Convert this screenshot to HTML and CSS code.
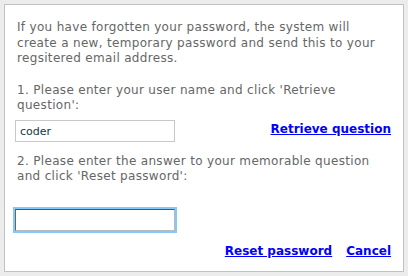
FILE: index.html
```html
<!DOCTYPE html>
<html>
<head>
<meta charset="utf-8">
<link rel="stylesheet" href="styles.css">
</head>
<body>
<div class="panel">
  <p class="text">If you have forgotten your password, the system will create a new, temporary password and send this to your regsitered email address.</p>
  <p class="text step">1. Please enter your user name and click 'Retrieve question':</p>
  <div class="row">
    <input class="field" type="text" value="coder">
    <a class="link" href="#">Retrieve question</a>
  </div>
  <p class="text step2">2. Please enter the answer to your memorable question and click 'Reset password':</p>
  <div class="row row2">
    <input class="field focus" type="text" value="">
  </div>
  <div class="actions">
    <a class="link" href="#">Reset password</a>
    <a class="link" href="#">Cancel</a>
  </div>
</div>
</body>
</html>
```
FILE: styles.css
```css
html, body {
  margin: 0;
  padding: 0;
  background: #ececec;
}
body {
  padding: 4px;
  font-family: "DejaVu Sans", Verdana, sans-serif;
  font-size: 12px;
}
.panel {
  width: 374px;
  height: 240px;
  background: #ffffff;
  border: 1px solid #c2c2c2;
  padding: 15px 12px 11px 12px;
  display: flex;
  flex-direction: column;
}
.text {
  margin: 0;
  max-width: 364px;
  color: #666666;
  line-height: 15.5px;
  letter-spacing: 0.32px;
}
.step {
  margin-top: 16px;
}
.row {
  display: flex;
  align-items: center;
  justify-content: space-between;
  margin-top: 6px;
}
.field {
  box-sizing: border-box;
  width: 160px;
  height: 22px;
  margin: 0 0 0 -2px;
  border: 1px solid #c8c8c8;
  padding: 2px 4px 0;
  font-family: "DejaVu Sans", Verdana, sans-serif;
  font-size: 11px;
  color: #0f3a44;
  background: #fff;
  outline: none;
}
.focus {
  border: 1px solid #b9b9b9;
  border-top-color: #555555;
  border-left-color: #666666;
  box-shadow: 0 0 0 2px #84c9fb;
}
.link {
  color: #0000ff;
  font-weight: bold;
  text-decoration: underline;
  line-height: 15px;
  margin-bottom: 2px;
}
.step2 {
  margin-top: 12px;
}
.row2 {
  margin-top: 24px;
}
.actions {
  display: flex;
  justify-content: flex-end;
  gap: 14px;
  margin-top: 13px;
}
```
